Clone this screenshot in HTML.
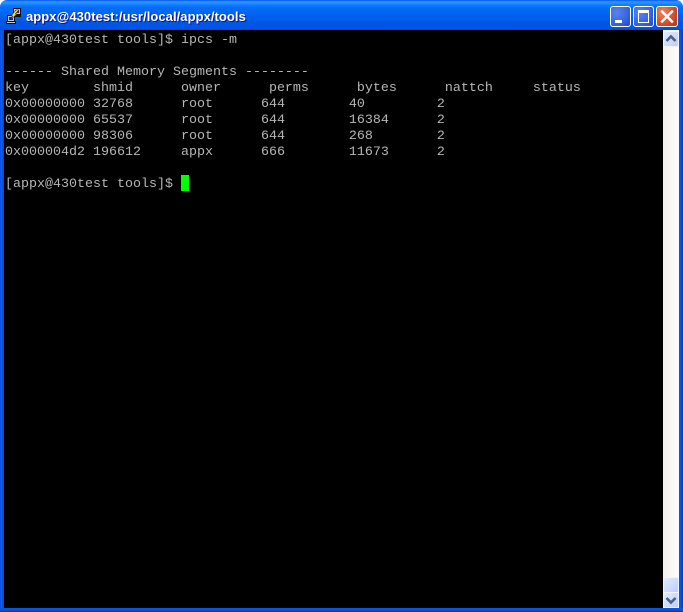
<!DOCTYPE html>
<html><head><meta charset="utf-8"><style>
html,body{margin:0;padding:0;background:#000;width:683px;height:612px;overflow:hidden}
#w{position:absolute;left:0;top:0;width:683px;height:612px;background:linear-gradient(90deg,#0831d9 0,#166aee 1px,#0855dd 2px,#0855dd 3px,#0640c0 4px,#0855dd 5px,#0855dd 679px,#0855dd 680px,#0855dd 681px,#0831d9 683px);overflow:hidden}
#bb{position:absolute;left:0;top:608px;width:683px;height:4px;background:linear-gradient(180deg,#0855dd 0,#0855dd 50%,#0640c0 75%,#0831d9 100%)}
#tb{position:absolute;left:0;top:0;width:683px;height:30px;border-radius:7px 7px 0 0;background:linear-gradient(180deg,#0058ee 0%,#3593ff 6%,#288eff 10%,#127dff 16%,#036ffc 24%,#0262ee 50%,#0057e5 75%,#0054e3 88%,#0055eb 94%,#0048c8 100%)}
#cor{position:absolute;left:0;top:0;width:683px;height:8px;background:#fff}
#t{position:absolute;left:26px;top:8px;font:bold 13px/18px "Liberation Sans",sans-serif;color:#fff;text-shadow:1px 1px 0 #0f1089;white-space:pre;letter-spacing:.06px}
.b{position:absolute;top:6px;width:19px;height:19px;border:1px solid #fff;border-radius:3px;background:radial-gradient(circle at 30% 30%,#5a83ef 0%,#3c6ae4 50%,#2148c9 100%)}
#term{position:absolute;left:4px;top:30px;width:659px;height:578px;background:#000}
pre{position:absolute;left:5px;top:33px;margin:0;font:13.333px/16px "Liberation Mono",monospace;color:#b6b6b6}
#cur{position:absolute;left:181px;top:175px;width:8px;height:16px;background:#0f0}
#sb{position:absolute;left:663px;top:30px;width:16px;height:578px;background:linear-gradient(90deg,#f3f1ec,#fefefb)}
.s{position:absolute;left:663px;width:14px;height:14px;border:1px solid #eef3fd;border-radius:2px;background:linear-gradient(135deg,#e1eafe,#bccffb)}
</style></head><body><div id="w">
<div id="cor"></div>
<div id="tb"></div>
<div id="bb"></div>
<svg style="position:absolute;left:6px;top:8px" width="16" height="16" viewBox="0 0 16 16" shape-rendering="crispEdges">
<rect x="7" y="0" width="8" height="7" fill="#111"/><rect x="8" y="1" width="6" height="5" fill="#c6c6c6"/><rect x="9" y="2" width="4" height="3" fill="#2222aa"/>
<rect x="1" y="7" width="8" height="7" fill="#111"/><rect x="2" y="8" width="6" height="5" fill="#c6c6c6"/><rect x="3" y="9" width="4" height="3" fill="#2222aa"/>
<rect x="0" y="13" width="10" height="3" fill="#111"/><rect x="1" y="14" width="8" height="1" fill="#c6c6c6"/>
<rect x="8" y="7" width="7" height="2" fill="#111"/>
<path d="M10 2 L13 2 L9 6 L11 6 L4 12 L7 8 L5 8 Z" fill="#ffe600" stroke="#111" stroke-width=".5" shape-rendering="auto"/>
</svg>
<div id="t">appx@430test:/usr/local/appx/tools</div>
<div class="b" style="left:610px"><div style="position:absolute;left:4px;top:13px;width:7px;height:3px;background:#fff"></div></div>
<div class="b" style="left:633px"><div style="position:absolute;left:4px;top:3px;width:11px;height:13px;border:1px solid #fff;border-top-width:3px;box-sizing:border-box"></div></div>
<div class="b" style="left:656px;width:20px;background:radial-gradient(circle at 30% 30%,#e8876a 0%,#d9532f 50%,#b5321a 100%)">
<svg style="position:absolute;left:0;top:0" width="20" height="19" viewBox="0 0 20 19"><path d="M5 4.5 L15 14.5 M15 4.5 L5 14.5" stroke="#fff" stroke-width="2.4" stroke-linecap="square"/></svg></div>
<div id="term"></div>
<pre>[appx@430test tools]$ ipcs -m

------ Shared Memory Segments --------
key        shmid      owner      perms      bytes      nattch     status
0x00000000 32768      root      644        40         2
0x00000000 65537      root      644        16384      2
0x00000000 98306      root      644        268        2
0x000004d2 196612     appx      666        11673      2

[appx@430test tools]$ </pre>
<div id="cur"></div>
<div id="sb"></div>
<div class="s" style="top:31px"><svg width="14" height="14" viewBox="0 0 14 14"><path d="M2.5 9 L7 4.5 L11.5 9" fill="none" stroke="#4d6185" stroke-width="2.6"/></svg></div>
<div class="s" style="top:577px"></div>
<div class="s" style="top:592px"><svg width="14" height="14" viewBox="0 0 14 14"><path d="M2.5 5 L7 9.5 L11.5 5" fill="none" stroke="#4d6185" stroke-width="2.6"/></svg></div>
</div></body></html>
